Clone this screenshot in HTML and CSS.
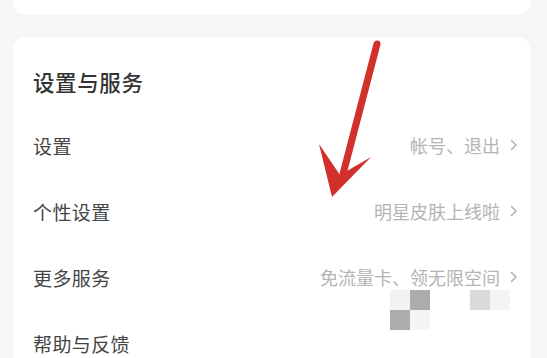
FILE: index.html
```html
<!DOCTYPE html>
<html lang="zh">
<head>
<meta charset="utf-8">
<link rel="stylesheet" href="styles.css">
</head>
<body>
<div class="page">
  <div class="card top-card"></div>
  <div class="card main-card">
    <div class="card-title">设置与服务</div>
    <div class="row">
      <span class="row-label">设置</span>
      <span class="row-extra">帐号、退出<svg class="chev" viewBox="0 0 8 12" width="8" height="12"><polyline points="1.5,1.5 6,6 1.5,10.5"/></svg></span>
    </div>
    <div class="row">
      <span class="row-label">个性设置</span>
      <span class="row-extra">明星皮肤上线啦<svg class="chev" viewBox="0 0 8 12" width="8" height="12"><polyline points="1.5,1.5 6,6 1.5,10.5"/></svg></span>
    </div>
    <div class="row">
      <span class="row-label">更多服务</span>
      <span class="row-extra">免流量卡、领无限空间<svg class="chev" viewBox="0 0 8 12" width="8" height="12"><polyline points="1.5,1.5 6,6 1.5,10.5"/></svg></span>
    </div>
    <div class="row">
      <span class="row-label">帮助与反馈</span>
    </div>
  </div>
</div>
<div class="mosaic">
  <i class="px px-a"></i>
  <i class="px px-b"></i>
  <i class="px px-c"></i>
  <i class="px px-d"></i>
  <i class="px px-e"></i>
  <i class="px px-f"></i>
</div>
<svg class="arrow" width="547" height="358" viewBox="0 0 547 358">
  <line x1="377" y1="44" x2="343" y2="174" stroke="#d2302a" stroke-width="7" stroke-linecap="round"/>
  <polygon points="319,144 340,175 371,157 332,197" fill="#d2302a"/>
</svg>
</body>
</html>
```
FILE: styles.css
```css
html, body {
  margin: 0;
  padding: 0;
  background: #f6f6f8;
  overflow: hidden;
}
body {
  width: 547px;
  height: 358px;
  position: relative;
  font-family: "Noto Sans CJK SC", "Noto Sans", sans-serif;
}
.page {
  height: 358px;
  padding: 0 17px 0 13px;
  display: flex;
  flex-direction: column;
  gap: 22px;
  overflow: hidden;
}
.card {
  background: #ffffff;
}
.top-card {
  height: 15px;
  flex: none;
  border-radius: 0 0 12px 12px;
}
.main-card {
  flex: 1;
  min-height: 0;
  overflow: hidden;
  border-radius: 12px 12px 0 0;
  padding: 31px 12px 0 20px;
}
.card-title {
  font-size: 21.5px;
  line-height: 28px;
  font-weight: 500;
  color: #333333;
  letter-spacing: 0.6px;
  margin-bottom: 16px;
}
.row {
  height: 66px;
  display: flex;
  align-items: center;
  justify-content: space-between;
}
.row-label {
  font-size: 19px;
  color: #444444;
  letter-spacing: 0.4px;
}
.row-extra {
  display: flex;
  align-items: center;
  font-size: 18px;
  color: #b4b4b4;
}
.chev {
  margin-left: 10px;
  fill: none;
  stroke: #b4b4b4;
  stroke-width: 1.6;
  stroke-linecap: round;
  stroke-linejoin: round;
}
.mosaic {
  position: absolute;
  left: 0;
  top: 0;
}
.px {
  position: absolute;
  width: 20px;
  height: 20px;
  display: block;
}
.px-a { left: 410px; top: 290px; background: #acacac; }
.px-b { left: 390px; top: 310px; background: #acacac; }
.px-c { left: 470px; top: 290px; background: #d9d9d9; }
.px-d { left: 390px; top: 290px; background: #f2f2f2; }
.px-e { left: 410px; top: 310px; background: #f5f5f5; }
.px-f { left: 490px; top: 290px; background: #f4f4f4; }
.arrow {
  position: absolute;
  left: 0;
  top: 0;
}
```
